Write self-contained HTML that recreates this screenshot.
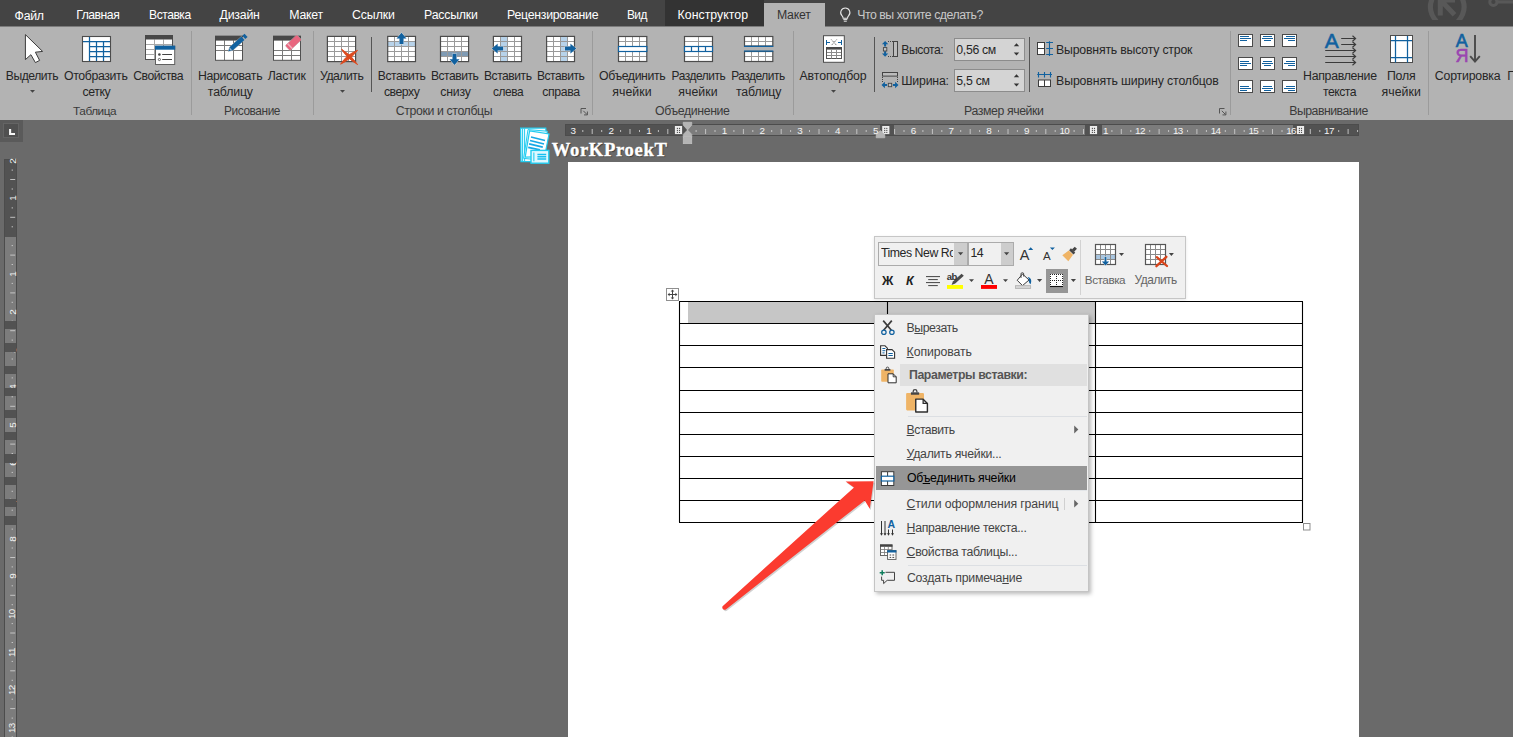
<!DOCTYPE html>
<html lang="ru"><head><meta charset="utf-8"><title>Word</title>
<style>
html,body{margin:0;padding:0}
body{width:1513px;height:737px;overflow:hidden;background:#6a6a6a;position:relative;font-family:"Liberation Sans", sans-serif;}
#root{position:absolute;left:0;top:0;width:1513px;height:737px;overflow:hidden}
#root div{position:absolute}
.t{position:absolute;white-space:nowrap;line-height:20px;height:20px}
u{text-decoration:underline;text-underline-offset:1px;text-decoration-thickness:1px}
svg{position:absolute;left:0;top:0}
</style></head><body><div id="root">

<div style="left:0px;top:0px;width:1513px;height:27px;background:#444444;"></div>
<div style="left:0px;top:26px;width:1513px;height:94px;background:#b3b3b3;"></div>
<div style="left:0px;top:0px;width:1513px;height:26px;background:#444444;"></div>
<div style="left:0px;top:26px;width:1513px;height:1px;background:#7c7c7c;"></div>
<div style="left:665px;top:0px;width:99px;height:26px;background:#333333;"></div>
<div style="left:764px;top:3px;width:61px;height:24px;background:#b3b3b3;"></div>
<div style="left:191px;top:31px;width:1px;height:84px;background:#9b9b9b;"></div>
<div style="left:313px;top:31px;width:1px;height:84px;background:#9b9b9b;"></div>
<div style="left:592px;top:31px;width:1px;height:84px;background:#9b9b9b;"></div>
<div style="left:793px;top:31px;width:1px;height:84px;background:#9b9b9b;"></div>
<div style="left:1230px;top:31px;width:1px;height:84px;background:#9b9b9b;"></div>
<div style="left:1428px;top:31px;width:1px;height:84px;background:#9b9b9b;"></div>
<div style="left:371px;top:37px;width:1px;height:55px;background:#555555;"></div>
<div style="left:874px;top:37px;width:1px;height:55px;background:#555555;"></div>
<div style="left:1029px;top:37px;width:1px;height:55px;background:#555555;"></div>
<div style="left:954px;top:38px;width:71px;height:23px;background:#d4d4d4;box-sizing:border-box;border:1px solid #8c8c8c;"></div>
<div style="left:954px;top:69px;width:71px;height:23px;background:#d4d4d4;box-sizing:border-box;border:1px solid #8c8c8c;"></div>
<div style="left:568px;top:162px;width:791px;height:600px;background:#ffffff;"></div>
<div style="left:565px;top:124px;width:794px;height:12px;background:#7c7c7c;"></div>
<div style="left:565px;top:124px;width:122px;height:12px;background:#525252;"></div>
<div style="left:879.5px;top:124px;width:14px;height:12px;background:#525252;"></div>
<div style="left:1085px;top:124px;width:16.5px;height:12px;background:#525252;"></div>
<div style="left:1293px;top:124px;width:66px;height:12px;background:#525252;"></div>
<div style="left:565px;top:124px;width:794px;height:12px;background:transparent;box-sizing:border-box;border:1px solid #4c4c4c;"></div>
<div style="left:4.4px;top:159.3px;width:12.2px;height:578px;background:#7c7c7c;"></div>
<div style="left:4.4px;top:159.3px;width:12.2px;height:77.89999999999998px;background:#525252;"></div>
<div style="left:4.4px;top:321.1px;width:12.2px;height:8.3px;background:#525252;"></div>
<div style="left:4.4px;top:343.3px;width:12.2px;height:8.3px;background:#525252;"></div>
<div style="left:4.4px;top:365.5px;width:12.2px;height:8.3px;background:#525252;"></div>
<div style="left:4.4px;top:387.7px;width:12.2px;height:8.3px;background:#525252;"></div>
<div style="left:4.4px;top:409.9px;width:12.2px;height:8.3px;background:#525252;"></div>
<div style="left:4.4px;top:432.1px;width:12.2px;height:8.3px;background:#525252;"></div>
<div style="left:4.4px;top:454.3px;width:12.2px;height:8.3px;background:#525252;"></div>
<div style="left:4.4px;top:476.5px;width:12.2px;height:8.3px;background:#525252;"></div>
<div style="left:4.4px;top:498.7px;width:12.2px;height:8.3px;background:#525252;"></div>
<div style="left:4.4px;top:516.3px;width:12.2px;height:8.3px;background:#525252;"></div>
<div style="left:4.4px;top:159.3px;width:12.2px;height:578px;background:transparent;box-sizing:border-box;border:1px solid #4c4c4c;border-bottom:none;"></div>
<div style="left:0px;top:120px;width:23px;height:22px;background:#5a5a5a;"></div>
<div style="left:3px;top:123px;width:16px;height:15px;background:#505050;box-sizing:border-box;border:1px solid #646464;"></div>
<svg width="1513" height="737" viewBox="0 0 1513 737">
<path d="M25.4 34.6 L25.4 59.6 L30.9 54.7 L35.4 62.6 L39.6 60.4 L35.4 52.2 L42.6 51.4 Z" fill="#ffffff" stroke="#3c3c3c" stroke-width="1" stroke-linejoin="miter"/>
<path d="M30.0 89.9 h5 l-2.5 2.8 Z" fill="#444444"/>
<path d="M340.0 89.9 h5 l-2.5 2.8 Z" fill="#444444"/>
<path d="M831.0 89.9 h5 l-2.5 2.8 Z" fill="#444444"/>
<rect x="82.5" y="36.5" width="28" height="25" fill="#fff"/>
<path d="M83 41.5H110.5 M89.5 46.5H110.5 M89.5 51.5H110.5 M89.5 56.5H110.5 M89.5 37V61.5 M96.5 41.5V61.5 M103.5 41.5V61.5" stroke="#11619f" stroke-width="1.25" fill="none"/>
<rect x="82.5" y="36.5" width="28" height="25" fill="none" stroke="#4c4c4c" stroke-width="1.1"/>
<rect x="145.5" y="35.5" width="27" height="24" fill="#fff"/>
<path d="M145.5 44.5H172.5 M145.5 49.5H172.5 M145.5 54.5H172.5 M154.5 39.5V59.5 M163.5 39.5V59.5" stroke="#a8a8a8" stroke-width="1" fill="none"/>
<rect x="145.5" y="35.5" width="27" height="24" fill="none" stroke="#505050" stroke-width="1"/>
<rect x="145" y="35" width="28" height="4.5" fill="#484848"/>
<rect x="155.5" y="46.2" width="19.2" height="18.3" fill="#fff" stroke="#606060" stroke-width="1"/>
<rect x="155" y="45.7" width="20.2" height="4" fill="#11619f"/>
<path d="M162.2 54.5H172 M162.2 59.5H172" stroke="#444" stroke-width="1" fill="none"/><circle cx="159.4" cy="54.5" r="1.3" fill="#444"/><circle cx="159.4" cy="59.5" r="1.1" fill="#fff" stroke="#444" stroke-width="0.8"/>
<rect x="215.5" y="36.3" width="27.0" height="24.0" fill="#fff"/><path d="M224.5 40.3V60.3M233.5 40.3V60.3M215.5 45.5H242.5M215.5 50.5H242.5" stroke="#7a7a7a" stroke-width="1" fill="none"/><rect x="215.5" y="36.3" width="27.0" height="24.0" fill="none" stroke="#505050" stroke-width="1"/><rect x="215.0" y="35.8" width="28.0" height="4.8" fill="#484848"/>
<g transform="translate(228.3 51.3) rotate(-41.8)"><path d="M0 0 L4 -2.25 L19.6 -2.25 L19.6 2.25 L4 2.25 Z" fill="#11619f" stroke="#b3b3b3" stroke-width="0.8" paint-order="stroke"/><rect x="20.8" y="-2.25" width="3" height="4.5" fill="#11619f"/><path d="M2.2 -1.0 L3.6 -1.8 L3.6 1.8 L2.2 1.0Z" fill="#9db9d2"/></g>
<rect x="273.5" y="36.3" width="27.0" height="24.0" fill="#fff"/><path d="M282.5 40.3V60.3M291.5 40.3V60.3M273.5 50.5H300.5M273.5 55.5H300.5" stroke="#7a7a7a" stroke-width="1" fill="none"/><rect x="273.5" y="36.3" width="27.0" height="24.0" fill="none" stroke="#505050" stroke-width="1"/><rect x="273.0" y="35.8" width="28.0" height="4.8" fill="#484848"/>
<g transform="translate(293.4 42.7) rotate(-43)"><rect x="-7.9" y="-3.4" width="15.8" height="6.8" rx="1.2" fill="#e8667f" stroke="#b3b3b3" stroke-width="0.7" paint-order="stroke"/><rect x="-5.6" y="-3.4" width="1.5" height="6.8" fill="#f4b0bd"/></g>
<rect x="327.4" y="36.4" width="28.200000000000045" height="25.200000000000003" fill="#ffffff"/><path d="M334.5 36.4V61.6M341.5 36.4V61.6M348.5 36.4V61.6M327.4 41.5H355.6M327.4 46.5H355.6M327.4 51.5H355.6M327.4 56.5H355.6" stroke="#9a9a9a" stroke-width="1" fill="none"/><rect x="327.4" y="36.4" width="28.200000000000045" height="25.200000000000003" fill="none" stroke="#4c4c4c" stroke-width="1.2"/>
<path d="M341.6 49.2 Q351.5 55 357.6 64.6 Q346.5 58 341.6 49.2Z M357.6 50.3 Q350.5 59.5 340.6 64.2 Q346.5 54.5 357.6 50.3Z" fill="#dc4a1e" stroke="#dc4a1e" stroke-width="0.9" stroke-linejoin="round"/>
<rect x="387.7" y="36.4" width="27.80000000000001" height="25.200000000000003" fill="#ffffff"/><rect x="387.7" y="41.44" width="27.80000000000001" height="5.04" fill="#b8d3ea"/><path d="M394.5 36.4V61.6M401.5 36.4V61.6M408.5 36.4V61.6M387.7 41.5H415.5M387.7 46.5H415.5M387.7 51.5H415.5M387.7 56.5H415.5" stroke="#9a9a9a" stroke-width="1" fill="none"/><rect x="387.7" y="36.4" width="27.80000000000001" height="25.200000000000003" fill="none" stroke="#4c4c4c" stroke-width="1.2"/>
<path transform="translate(401.5 38.4) rotate(0)" d="M0 -5.65 L4.9 0.14999999999999947 L2.0 0.14999999999999947 L2.0 5.65 L-2.0 5.65 L-2.0 0.14999999999999947 L-4.9 0.14999999999999947 Z" fill="#11619f" stroke="#e8eef4" stroke-width="0.8" paint-order="stroke"/>
<rect x="440.5" y="36.4" width="28.100000000000023" height="25.200000000000003" fill="#ffffff"/><rect x="440.5" y="51.52" width="28.100000000000023" height="5.04" fill="#7f9bb4"/><path d="M447.5 36.4V61.6M454.5 36.4V61.6M461.5 36.4V61.6M440.5 41.5H468.6M440.5 46.5H468.6M440.5 51.5H468.6M440.5 56.5H468.6" stroke="#9a9a9a" stroke-width="1" fill="none"/><rect x="440.5" y="36.4" width="28.100000000000023" height="25.200000000000003" fill="none" stroke="#4c4c4c" stroke-width="1.2"/>
<path transform="translate(454.5 59.4) rotate(180)" d="M0 -5.65 L4.9 0.14999999999999947 L2.0 0.14999999999999947 L2.0 5.65 L-2.0 5.65 L-2.0 0.14999999999999947 L-4.9 0.14999999999999947 Z" fill="#11619f" stroke="#e8eef4" stroke-width="0.8" paint-order="stroke"/>
<rect x="493.4" y="36.4" width="28.100000000000023" height="25.200000000000003" fill="#ffffff"/><rect x="500.42" y="36.4" width="7.03" height="25.200000000000003" fill="#b8d3ea"/><path d="M500.5 36.4V61.6M507.5 36.4V61.6M514.5 36.4V61.6M493.4 41.5H521.5M493.4 46.5H521.5M493.4 51.5H521.5M493.4 56.5H521.5" stroke="#9a9a9a" stroke-width="1" fill="none"/><rect x="493.4" y="36.4" width="28.100000000000023" height="25.200000000000003" fill="none" stroke="#4c4c4c" stroke-width="1.2"/>
<path transform="translate(497.5 48.6) rotate(270)" d="M0 -5.65 L4.9 0.14999999999999947 L2.0 0.14999999999999947 L2.0 5.65 L-2.0 5.65 L-2.0 0.14999999999999947 L-4.9 0.14999999999999947 Z" fill="#11619f" stroke="#e8eef4" stroke-width="0.8" paint-order="stroke"/>
<rect x="546.6" y="36.4" width="27.899999999999977" height="25.200000000000003" fill="#ffffff"/><rect x="560.55" y="36.4" width="6.97" height="25.200000000000003" fill="#b8d3ea"/><path d="M553.5 36.4V61.6M560.5 36.4V61.6M567.5 36.4V61.6M546.6 41.5H574.5M546.6 46.5H574.5M546.6 51.5H574.5M546.6 56.5H574.5" stroke="#9a9a9a" stroke-width="1" fill="none"/><rect x="546.6" y="36.4" width="27.899999999999977" height="25.200000000000003" fill="none" stroke="#4c4c4c" stroke-width="1.2"/>
<path transform="translate(570.6 48.6) rotate(90)" d="M0 -5.65 L4.9 0.14999999999999947 L2.0 0.14999999999999947 L2.0 5.65 L-2.0 5.65 L-2.0 0.14999999999999947 L-4.9 0.14999999999999947 Z" fill="#11619f" stroke="#e8eef4" stroke-width="0.8" paint-order="stroke"/>
<rect x="618.5" y="36.5" width="28.299999999999955" height="25.0" fill="#ffffff"/><path d="M625.5 36.5V61.5M632.5 36.5V61.5M639.5 36.5V61.5M618.5 41.5H646.8M618.5 46.5H646.8M618.5 51.5H646.8M618.5 56.5H646.8" stroke="#9a9a9a" stroke-width="1" fill="none"/><rect x="618.5" y="36.5" width="28.299999999999955" height="25.0" fill="none" stroke="#4c4c4c" stroke-width="1.2"/>
<rect x="618.5" y="46.5" width="28.3" height="5" fill="#fff" stroke="#11619f" stroke-width="1.2"/>
<rect x="684.5" y="36.5" width="28.0" height="25.0" fill="#ffffff"/><path d="M698.5 36.5V61.5M684.5 41.5H712.5M684.5 46.5H712.5M684.5 51.5H712.5M684.5 56.5H712.5" stroke="#9a9a9a" stroke-width="1" fill="none"/><rect x="684.5" y="36.5" width="28.0" height="25.0" fill="none" stroke="#4c4c4c" stroke-width="1.2"/>
<rect x="684.5" y="46.5" width="28" height="5" fill="#fff" stroke="#11619f" stroke-width="1.2"/><path d="M691.5 46.5v5M698.5 46.5v5M705.5 46.5v5" stroke="#11619f" stroke-width="1.2"/>
<rect x="744.5" y="36.5" width="28.299999999999955" height="9.5" fill="#ffffff"/><path d="M751.5 36.5V46M758.5 36.5V46M765.5 36.5V46M744.5 41.5H772.8" stroke="#9a9a9a" stroke-width="1" fill="none"/><rect x="744.5" y="36.5" width="28.299999999999955" height="9.5" fill="none" stroke="#4c4c4c" stroke-width="1.2"/>
<rect x="744.5" y="51.5" width="28.299999999999955" height="10.0" fill="#ffffff"/><path d="M751.5 51.5V61.5M758.5 51.5V61.5M765.5 51.5V61.5M744.5 56.5H772.8" stroke="#9a9a9a" stroke-width="1" fill="none"/><rect x="744.5" y="51.5" width="28.299999999999955" height="10.0" fill="none" stroke="#4c4c4c" stroke-width="1.2"/>
<path d="M744 46.3H773.3 M744 51.2H773.3" stroke="#11619f" stroke-width="1.3"/>
<rect x="823.5" y="35.7" width="20.8" height="26.6" fill="#fff" stroke="#4c4c4c" stroke-width="1"/>
<path d="M826.5 40V45 M841.5 40V45 M826.5 42.5H830 M838 42.5H841.5" stroke="#11619f" stroke-width="1" fill="none"/>
<path d="M831.3 39.5L836.7 45.5 M836.7 39.5L831.3 45.5" stroke="#555" stroke-width="0.9" stroke-dasharray="1.2 0.9" fill="none"/>
<rect x="826.5" y="47.5" width="15" height="11" fill="#fff" stroke="#555" stroke-width="1"/><rect x="826" y="47" width="16" height="2.6" fill="#484848"/><path d="M827 52.5H841 M827 55.5H841 M831.5 50V58.5 M836.5 50V58.5" stroke="#8a8a8a" stroke-width="1" fill="none"/>
<path d="M885.1 40.9 L888.3000000000001 44.3 H886.1 V46.5 H884.1 V44.3 H881.9 Z" fill="#11619f"/>
<path d="M885.1 56.8 L888.3000000000001 53.4 H886.1 V51.199999999999996 H884.1 V53.4 H881.9 Z" fill="#11619f"/>
<rect x="883.4" y="47.6" width="3.4" height="3.4" fill="#c4c4c4" stroke="#444" stroke-width="0.9"/>
<path d="M888 41.5H893 M888 56.5H893" stroke="#444" stroke-width="1" stroke-dasharray="1 1" fill="none"/>
<rect x="893.5" y="41.5" width="4" height="15" fill="#bcbcbc" stroke="#444" stroke-width="1"/>
<rect x="882.5" y="72.5" width="15" height="3.6" fill="#bcbcbc" stroke="#444" stroke-width="1"/>
<path d="M882.5 77V82.5 M897.5 77V82.5" stroke="#444" stroke-width="1" stroke-dasharray="1 1" fill="none"/>
<path d="M881.5 85 L884.9 81.8 V84 H887.1 V86 H884.9 V88.2 Z" fill="#11619f"/>
<path d="M898.5 85 L895.1 81.8 V84 H892.9 V86 H895.1 V88.2 Z" fill="#11619f"/>
<rect x="888.3" y="83.3" width="3.4" height="3.4" fill="#c4c4c4" stroke="#444" stroke-width="0.9"/>
<path d="M1013.8 46.2 h5.4 l-2.7 -3Z M1013.8 52.5 h5.4 l-2.7 3Z" fill="#333"/>
<path d="M1013.8 77.2 h5.4 l-2.7 -3Z M1013.8 83.5 h5.4 l-2.7 3Z" fill="#333"/>
<rect x="1037.5" y="42.5" width="7" height="12" fill="#fff" stroke="#3c3c3c" stroke-width="1"/><path d="M1037.5 48.5H1044.5" stroke="#3c3c3c" stroke-width="1"/>
<path d="M1049.5 41.2V56 M1046.2 42.5H1053 M1046.2 48.5H1053 M1046.2 54.5H1053" stroke="#11619f" stroke-width="1.1" fill="none"/>
<rect x="1038.5" y="80" width="12" height="6.5" fill="#fff" stroke="#3c3c3c" stroke-width="1"/><path d="M1044.5 80V86.5" stroke="#3c3c3c" stroke-width="1"/>
<path d="M1037.2 74.5H1052 M1038.5 72V77.6 M1044.5 72V77.6 M1050.5 72V77.6" stroke="#11619f" stroke-width="1.1" fill="none"/>
<path d="M581 113.5V108.5H586" stroke="#555" stroke-width="1" fill="none"/><path d="M583.3 110.8L587 114.5 M587.4 111.5V114.9H584" stroke="#555" stroke-width="1" fill="none"/>
<path d="M1219.5 113.5V108.5H1224.5" stroke="#555" stroke-width="1" fill="none"/><path d="M1221.8 110.8L1225.5 114.5 M1225.9 111.5V114.9H1222.5" stroke="#555" stroke-width="1" fill="none"/>
<rect x="1238.5" y="34.5" width="14" height="12" fill="#fff" stroke="#4a4a4a" stroke-width="1"/>
<rect x="1240.0" y="36.0" width="9" height="1" fill="#11619f"/>
<rect x="1240.0" y="38.0" width="11" height="1" fill="#11619f"/>
<rect x="1240.0" y="40.0" width="7" height="1" fill="#11619f"/>
<rect x="1260.5" y="34.5" width="14" height="12" fill="#fff" stroke="#4a4a4a" stroke-width="1"/>
<rect x="1263.0" y="36.0" width="9" height="1" fill="#11619f"/>
<rect x="1262.0" y="38.0" width="11" height="1" fill="#11619f"/>
<rect x="1264.0" y="40.0" width="7" height="1" fill="#11619f"/>
<rect x="1282.5" y="34.5" width="14" height="12" fill="#fff" stroke="#4a4a4a" stroke-width="1"/>
<rect x="1286.0" y="36.0" width="9" height="1" fill="#11619f"/>
<rect x="1284.0" y="38.0" width="11" height="1" fill="#11619f"/>
<rect x="1288.0" y="40.0" width="7" height="1" fill="#11619f"/>
<rect x="1238.5" y="57.5" width="14" height="12" fill="#fff" stroke="#4a4a4a" stroke-width="1"/>
<rect x="1240.0" y="61.0" width="9" height="1" fill="#11619f"/>
<rect x="1240.0" y="63.0" width="11" height="1" fill="#11619f"/>
<rect x="1240.0" y="65.0" width="7" height="1" fill="#11619f"/>
<rect x="1260.5" y="57.5" width="14" height="12" fill="#fff" stroke="#4a4a4a" stroke-width="1"/>
<rect x="1263.0" y="61.0" width="9" height="1" fill="#11619f"/>
<rect x="1262.0" y="63.0" width="11" height="1" fill="#11619f"/>
<rect x="1264.0" y="65.0" width="7" height="1" fill="#11619f"/>
<rect x="1282.5" y="57.5" width="14" height="12" fill="#fff" stroke="#4a4a4a" stroke-width="1"/>
<rect x="1286.0" y="61.0" width="9" height="1" fill="#11619f"/>
<rect x="1284.0" y="63.0" width="11" height="1" fill="#11619f"/>
<rect x="1288.0" y="65.0" width="7" height="1" fill="#11619f"/>
<rect x="1238.5" y="80.5" width="14" height="12" fill="#fff" stroke="#4a4a4a" stroke-width="1"/>
<rect x="1240.0" y="86.0" width="9" height="1" fill="#11619f"/>
<rect x="1240.0" y="88.0" width="11" height="1" fill="#11619f"/>
<rect x="1240.0" y="90.0" width="7" height="1" fill="#11619f"/>
<rect x="1260.5" y="80.5" width="14" height="12" fill="#fff" stroke="#4a4a4a" stroke-width="1"/>
<rect x="1263.0" y="86.0" width="9" height="1" fill="#11619f"/>
<rect x="1262.0" y="88.0" width="11" height="1" fill="#11619f"/>
<rect x="1264.0" y="90.0" width="7" height="1" fill="#11619f"/>
<rect x="1282.5" y="80.5" width="14" height="12" fill="#fff" stroke="#4a4a4a" stroke-width="1"/>
<rect x="1286.0" y="86.0" width="9" height="1" fill="#11619f"/>
<rect x="1284.0" y="88.0" width="11" height="1" fill="#11619f"/>
<rect x="1288.0" y="90.0" width="7" height="1" fill="#11619f"/>
<path d="M1341.2 38.5H1355.6 M1352.5 35.8L1355.6 38.5L1352.5 41.2" stroke="#3a3a3a" stroke-width="1.15" fill="none"/>
<path d="M1341.2 44.5H1355.6 M1352.5 41.8L1355.6 44.5L1352.5 47.2" stroke="#3a3a3a" stroke-width="1.15" fill="none"/>
<path d="M1325.2 50.5H1355.6 M1352.5 47.8L1355.6 50.5L1352.5 53.2" stroke="#3a3a3a" stroke-width="1.15" fill="none"/>
<path d="M1325.2 56.5H1355.6 M1352.5 53.8L1355.6 56.5L1352.5 59.2" stroke="#3a3a3a" stroke-width="1.15" fill="none"/>
<path d="M1325.2 62.5H1355.6 M1352.5 59.8L1355.6 62.5L1352.5 65.2" stroke="#3a3a3a" stroke-width="1.15" fill="none"/>
<rect x="1390.5" y="35.5" width="22" height="27" fill="#fff" stroke="#4c4c4c" stroke-width="1"/>
<path d="M1395.5 36V62.5 M1407.5 36V62.5 M1391 40.5H1412 M1391 57.5H1412" stroke="#11619f" stroke-width="1.25" fill="none"/>
<path d="M1475 35.1V61 M1470.2 56.2L1475 61.6L1479.8 56.2" stroke="#4a4a4a" stroke-width="1.9" fill="none"/>
<path d="M845.3 8 a4.6 4.6 0 0 1 3.2 7.9 c-0.8 0.9 -1 1.5 -1 2.4 h-4.4 c0 -0.9 -0.2 -1.5 -1 -2.4 a4.6 4.6 0 0 1 3.2 -7.9Z" fill="none" stroke="#e6e6e6" stroke-width="1.1"/><path d="M843.3 19.6h4 M843.8 21.2h3" stroke="#e6e6e6" stroke-width="1"/>
<g stroke="#585858" fill="none" stroke-width="5"><path d="M1436 -8 Q1424.5 8 1436.5 21.5"/><path d="M1458.5 -8 Q1470 8 1458 21.5"/><path d="M1440.3 15.5 V-3 M1441 0.5 L1454.5 14.8 M1440 0 H1455" /></g><circle cx="1493.4" cy="1.9" r="3.6" fill="none" stroke="#585858" stroke-width="3"/><path d="M1497.5 1.9H1513" stroke="#585858" stroke-width="3.2"/>
<rect x="1424" y="20" width="48" height="6" fill="#444444"/>
<path d="M592.2 129V134M630.0 129V134M667.8 129V134M705.6 129V134M743.4 129V134M781.2 129V134M819.0 129V134M856.8 129V134M894.6 129V134M932.4 129V134M970.2 129V134M1008.0 129V134M1045.8 129V134M1083.5 129V134M1121.3 129V134M1159.1 129V134M1196.9 129V134M1234.7 129V134M1272.5 129V134M1310.3 129V134M1348.1 129V134" stroke="#cccccc" stroke-width="0.9" fill="none"/><path d="M582.8 130V132M601.7 130V132M620.6 130V132M639.5 130V132M658.4 130V132M677.3 130V132M696.1 130V132M715.0 130V132M733.9 130V132M752.8 130V132M771.7 130V132M790.6 130V132M809.5 130V132M828.4 130V132M847.3 130V132M866.2 130V132M885.1 130V132M904.0 130V132M922.9 130V132M941.8 130V132M960.7 130V132M979.6 130V132M998.5 130V132M1017.4 130V132M1036.3 130V132M1055.2 130V132M1074.1 130V132M1093.0 130V132M1111.9 130V132M1130.8 130V132M1149.7 130V132M1168.6 130V132M1187.5 130V132M1206.4 130V132M1225.3 130V132M1244.2 130V132M1263.1 130V132M1282.0 130V132M1300.9 130V132M1319.8 130V132M1338.7 130V132M1357.6 130V132" stroke="#cccccc" stroke-width="0.9" fill="none"/>
<rect x="674.9" y="126" width="7.2" height="8.1" fill="#ececec"/><rect x="676.85" y="127.85" width="1.1" height="1.1" fill="#4a4a4a"/><rect x="676.85" y="129.85" width="1.1" height="1.1" fill="#4a4a4a"/><rect x="676.85" y="131.85" width="1.1" height="1.1" fill="#4a4a4a"/><rect x="678.95" y="127.85" width="1.1" height="1.1" fill="#4a4a4a"/><rect x="678.95" y="129.85" width="1.1" height="1.1" fill="#4a4a4a"/><rect x="678.95" y="131.85" width="1.1" height="1.1" fill="#4a4a4a"/>
<rect x="882.1999999999999" y="126" width="7.2" height="8.1" fill="#ececec"/><rect x="884.15" y="127.85" width="1.1" height="1.1" fill="#4a4a4a"/><rect x="884.15" y="129.85" width="1.1" height="1.1" fill="#4a4a4a"/><rect x="884.15" y="131.85" width="1.1" height="1.1" fill="#4a4a4a"/><rect x="886.25" y="127.85" width="1.1" height="1.1" fill="#4a4a4a"/><rect x="886.25" y="129.85" width="1.1" height="1.1" fill="#4a4a4a"/><rect x="886.25" y="131.85" width="1.1" height="1.1" fill="#4a4a4a"/>
<rect x="1089.9" y="126" width="7.2" height="8.1" fill="#ececec"/><rect x="1091.85" y="127.85" width="1.1" height="1.1" fill="#4a4a4a"/><rect x="1091.85" y="129.85" width="1.1" height="1.1" fill="#4a4a4a"/><rect x="1091.85" y="131.85" width="1.1" height="1.1" fill="#4a4a4a"/><rect x="1093.95" y="127.85" width="1.1" height="1.1" fill="#4a4a4a"/><rect x="1093.95" y="129.85" width="1.1" height="1.1" fill="#4a4a4a"/><rect x="1093.95" y="131.85" width="1.1" height="1.1" fill="#4a4a4a"/>
<rect x="1296.9" y="126" width="7.2" height="8.1" fill="#ececec"/><rect x="1298.85" y="127.85" width="1.1" height="1.1" fill="#4a4a4a"/><rect x="1298.85" y="129.85" width="1.1" height="1.1" fill="#4a4a4a"/><rect x="1298.85" y="131.85" width="1.1" height="1.1" fill="#4a4a4a"/><rect x="1300.95" y="127.85" width="1.1" height="1.1" fill="#4a4a4a"/><rect x="1300.95" y="129.85" width="1.1" height="1.1" fill="#4a4a4a"/><rect x="1300.95" y="131.85" width="1.1" height="1.1" fill="#4a4a4a"/>
<path d="M683.2 122.3 H691.8 V125 L687.5 130 L683.2 125 Z" fill="#b4b4b4" stroke="#c6c6c6" stroke-width="0.6"/>
<path d="M683.2 137 V134.4 L687.5 130 L691.8 134.4 V137 Z" fill="#b4b4b4" stroke="#c6c6c6" stroke-width="0.6"/>
<rect x="683.2" y="137.6" width="8.6" height="6.1" fill="#b4b4b4" stroke="#c6c6c6" stroke-width="0.6"/>
<path d="M876.2 137.8 V134.6 L880.5 130.6 L884.8 134.6 V137.8 Z" fill="#b4b4b4" stroke="#c6c6c6" stroke-width="0.6"/>
<path d="M10.2 179.5H15.2M10.2 217.3H15.2M10.2 255.1H15.2M10.2 292.9H15.2M10.2 330.7H15.2M10.2 368.5H15.2M10.2 406.3H15.2M10.2 444.1H15.2M10.2 481.9H15.2M10.2 519.7H15.2M10.2 557.5H15.2M10.2 595.3H15.2M10.2 633.0H15.2M10.2 670.8H15.2M10.2 708.6H15.2M11.6 170.1H13M11.6 189.0H13M11.6 207.9H13M11.6 226.8H13M11.6 245.6H13M11.6 264.5H13M11.6 283.4H13M11.6 302.3H13M11.6 321.2H13M11.6 340.1H13M11.6 359.0H13M11.6 377.9H13M11.6 396.8H13M11.6 415.7H13M11.6 434.6H13M11.6 453.5H13M11.6 472.4H13M11.6 491.3H13M11.6 510.2H13M11.6 529.1H13M11.6 548.0H13M11.6 566.9H13M11.6 585.8H13M11.6 604.7H13M11.6 623.6H13M11.6 642.5H13M11.6 661.4H13M11.6 680.3H13M11.6 699.2H13M11.6 718.1H13M11.6 737.0H13" stroke="#cccccc" stroke-width="0.9" fill="none"/>
<path d="M10.1 128.9V134H15" stroke="#f6f6f6" stroke-width="2.1" fill="none"/>
<rect x="688" y="302" width="199" height="21" fill="#c6c6c6"/><rect x="888" y="302" width="207" height="21" fill="#c6c6c6"/>
<path d="M679.0 301.5H1303.0M679.0 323.5H1303.0M679.0 345.5H1303.0M679.0 367.5H1303.0M679.0 390.5H1303.0M679.0 412.5H1303.0M679.0 434.5H1303.0M679.0 456.5H1303.0M679.0 478.5H1303.0M679.0 500.5H1303.0M679.0 522.5H1303.0M679.5 301.5V522.5M887.5 301.5V522.5M1095.5 301.5V522.5M1302.5 301.5V522.5" stroke="#000" stroke-width="1.1" fill="none"/>
<rect x="666.5" y="288.5" width="12" height="12" fill="#fff" stroke="#8f8f8f" stroke-width="1"/>
<path d="M672.5 290.6V298.4 M668.6 294.5H676.4" stroke="#444" stroke-width="1" fill="none"/><path d="M672.5 289.6l1.8 2h-3.6Z M672.5 299.4l1.8 -2h-3.6Z M667.6 294.5l2 -1.8v3.6Z M677.4 294.5l-2 -1.8v3.6Z" fill="#444"/>
<rect x="1303.5" y="523.5" width="6.5" height="6.5" fill="#fff" stroke="#8f8f8f" stroke-width="1"/>
<g>
<path d="M520.6 128.2 L545.8 128 L546.2 140 L536 161.6 L521 161.6 Z" fill="#f4fdff" stroke="#22ccf0" stroke-width="1.2"/>
<path d="M522.6 128.5 V161.5 M524.6 128.5 V161.5" stroke="#22ccf0" stroke-width="1"/>
<path d="M528 129.6 L547.4 131.2 L541 160 L523.6 158.4 Z" fill="#e6faff" stroke="#22ccf0" stroke-width="1"/>
<path d="M529.6 130.8 L549 134 L544.6 156.5 L525.2 157.2 Z" fill="#ffffff" stroke="#22ccf0" stroke-width="1.2"/>
<path d="M531 137 L545 140.5 M530 140.5 L544 144 M529.1 143.9 L542.8 147.2 M528.2 147.3 L540 149.9" stroke="#17a9e6" stroke-width="1.7"/>
<rect x="531" y="150.4" width="17.8" height="12.8" fill="#dff8ff" stroke="#22ccf0" stroke-width="1.4"/>
<path d="M537.4 154.6H546.2 M537.4 156.7H546.2 M537.4 159H546.2" stroke="#19bff0" stroke-width="1.5"/>
<path d="M533.8 152.6V161.2" stroke="#5cdcf6" stroke-width="1.6"/>
</g>
</svg>
<div style="left:874px;top:236px;width:312px;height:63px;background:#f0f0f0;box-sizing:border-box;border:1px solid #c6c6c6;box-shadow:0 1px 3px rgba(0,0,0,.10);"></div>
<div style="left:878px;top:242px;width:89.5px;height:24px;background:#f0f0f0;box-sizing:border-box;border:1px solid #ababab;"></div>
<div style="left:954px;top:243px;width:12.5px;height:22px;background:#cdcdcd;"></div>
<div style="left:968px;top:242px;width:46px;height:24px;background:#f0f0f0;box-sizing:border-box;border:1px solid #ababab;"></div>
<div style="left:1000.5px;top:243px;width:12.5px;height:22px;background:#cdcdcd;"></div>
<div style="left:1046px;top:269px;width:22px;height:24px;background:#969696;"></div>
<div style="left:1080px;top:240px;width:1px;height:55px;background:#d2d2d2;"></div>
<div style="left:874px;top:314px;width:215px;height:278px;background:#f0f0f0;box-sizing:border-box;border:1px solid #c4c4c4;box-shadow:2px 2px 4px rgba(0,0,0,.27);"></div>
<div style="left:900px;top:364px;width:187px;height:21.5px;background:#e0e0e0;"></div>
<div style="left:876.3px;top:466.2px;width:210.7px;height:23.8px;background:#969696;"></div>
<div style="left:908px;top:416px;width:179px;height:1px;background:#dcdfe3;"></div>
<div style="left:908px;top:564.5px;width:179px;height:1px;background:#dcdfe3;"></div>
<div style="left:908px;top:490px;width:179px;height:1px;background:#e2e5e8;"></div>
<div style="left:1064px;top:497.5px;width:1px;height:12.5px;background:#d0d0d0;"></div>
<svg width="1513" height="737" viewBox="0 0 1513 737">
<path d="M958.0 252.3 h5.2 l-2.6 2.9 Z" fill="#444444"/>
<path d="M1004.0 252.3 h5.2 l-2.6 2.9 Z" fill="#444444"/>
<path d="M1028.2 249.9 h5 l-2.5 -2.6Z M1049.9 247.4 h5 l-2.5 2.6Z" fill="#11619f"/>
<g transform="translate(1070.9 252.7) rotate(45) scale(0.92)"><rect x="-1.7" y="-7.6" width="3.4" height="4.4" fill="#444"/><rect x="-3.3" y="-3.4" width="6.6" height="2.8" fill="#444"/><path d="M-3.3 0 H3.3 L4.6 8.6 H-4.6 Z" fill="#efb466"/></g>
<path d="M926 276.6H940 M928.2 279.6H937.8 M926 282.6H940 M928.2 285.6H937.8" stroke="#444" stroke-width="1" fill="none"/>
<path d="M961.6 273.8 L963.8 275.8 L955.2 283.6 L951.6 285 L952.9 281.6 Z" fill="#4a4a4a"/>
<rect x="947" y="285" width="16" height="3.9" fill="#ffff00"/>
<path d="M969.0 279.2 h5 l-2.5 2.8 Z" fill="#444444"/>
<rect x="981" y="285" width="16" height="3.9" fill="#ff0000"/>
<path d="M1003.0 279.2 h5 l-2.5 2.8 Z" fill="#444444"/>
<path d="M1022.5 274 L1029 280 L1022.5 285.6 L1017.2 280.3 Z" fill="#fff" stroke="#3c3c3c" stroke-width="1"/><path d="M1021 278 V273.9 a1.35 1.2 0 0 1 2.7 0 V276.6" fill="none" stroke="#3c3c3c" stroke-width="0.9"/><path d="M1027.6 277.1 C1030.8 277.3 1032.2 280.6 1030.6 284.2 C1029 283 1028.4 281.2 1028.9 279 Z" fill="#11619f"/>
<rect x="1015.5" y="285.7" width="15.2" height="2.8" fill="#d4d4d4" stroke="#a8a8a8" stroke-width="0.7"/>
<path d="M1037.0 279 h5.2 l-2.6 2.9 Z" fill="#444444"/>
<rect x="1050" y="274" width="13" height="13" fill="#fff"/><path d="M1050 274.5H1063 M1050 280.5H1063" stroke="#222" stroke-width="1" stroke-dasharray="1 1" fill="none"/><path d="M1050.5 274V286 M1056.5 274V286 M1062.5 274V286" stroke="#222" stroke-width="1" stroke-dasharray="1 1" fill="none"/><path d="M1050 286.5H1063" stroke="#111" stroke-width="1.1"/>
<path d="M1070.8000000000002 279 h5.2 l-2.6 2.9 Z" fill="#444444"/>
<rect x="1095.5" y="244.5" width="20.0" height="20.0" fill="#ffffff"/><rect x="1095.5" y="254.50" width="20.0" height="5.00" fill="#a9c6e0"/><path d="M1100.5 244.5V264.5M1105.5 244.5V264.5M1110.5 244.5V264.5M1095.5 249.5H1115.5M1095.5 254.5H1115.5M1095.5 259.5H1115.5" stroke="#8a8a8a" stroke-width="1" fill="none"/><rect x="1095.5" y="244.5" width="20.0" height="20.0" fill="none" stroke="#555" stroke-width="1.2"/>
<path transform="translate(1105.5 261.2) rotate(180)" d="M0 -4.25 L3.6 -0.25 L0.9 -0.25 L0.9 4.25 L-0.9 4.25 L-0.9 -0.25 L-3.6 -0.25 Z" fill="#11619f" stroke="#e8eef4" stroke-width="0.8" paint-order="stroke"/>
<path d="M1119.0 253 h5 l-2.5 2.9 Z" fill="#444444"/>
<rect x="1145.5" y="244.5" width="20.0" height="20.0" fill="#ffffff"/><path d="M1150.5 244.5V264.5M1155.5 244.5V264.5M1160.5 244.5V264.5M1145.5 249.5H1165.5M1145.5 254.5H1165.5M1145.5 259.5H1165.5" stroke="#8a8a8a" stroke-width="1" fill="none"/><rect x="1145.5" y="244.5" width="20.0" height="20.0" fill="none" stroke="#555" stroke-width="1.2"/>
<path d="M1156.8 257.2 L1167 266 M1166.4 256.8 L1156.4 266.2" stroke="#d9441a" stroke-width="2.3" stroke-linecap="round" fill="none"/>
<path d="M1168.9 253 h5 l-2.5 2.9 Z" fill="#444444"/>
<path d="M1074.2 425.6 L1078.3 429.5 L1074.2 433.4Z" fill="#666"/>
<path d="M1074.2 499.8 L1078.3 503.7 L1074.2 507.59999999999997Z" fill="#666"/>
<path d="M883.2 320.6 L891.4 330.2 M891.8 320.6 L883.6 330.2" stroke="#3c3c3c" stroke-width="1.7" fill="none"/><circle cx="883.9" cy="332.2" r="2.2" fill="none" stroke="#11619f" stroke-width="1.25"/><circle cx="891.9" cy="332.2" r="2.2" fill="none" stroke="#11619f" stroke-width="1.25"/>
<path d="M880.6 345.8H885.0L887.4 348.2V355.40000000000003H880.6Z" fill="#fff" stroke="#333" stroke-width="1.1"/>
<path d="M882.4 348.5H885.4 M882.4 350.7H885.4 M882.4 352.9H884.6" stroke="#11619f" stroke-width="1"/>
<path d="M886.6 349.6H892.0L894.6 352.20000000000005V358.20000000000005H886.6Z" fill="#fff" stroke="#333" stroke-width="1.1"/>
<path d="M888.4 353.5H892.8 M888.4 355.5H892.8" stroke="#11619f" stroke-width="1"/>
<g transform="translate(881.2 366.8) scale(1.0)"><rect x="0" y="2.6" width="12.6" height="12.4" rx="0.8" fill="#efb466"/><path d="M3.4 2.2 h5.8 v1.7 h-5.8Z" fill="#444"/><path d="M5 2.4 V1.4 a1.3 1.1 0 0 1 2.6 0 V2.4" fill="none" stroke="#444" stroke-width="0.9"/><path d="M6.8 7 H12 L15 10 V16 H6.8 Z" fill="#fff" stroke="#2e2e2e" stroke-width="1" stroke-linejoin="round"/><path d="M12 7 V10 H15" fill="none" stroke="#2e2e2e" stroke-width="0.9"/></g>
<g transform="translate(906.1 389.2) scale(1.42)"><rect x="0" y="2.6" width="12.6" height="12.4" rx="0.8" fill="#efb466"/><path d="M3.4 2.2 h5.8 v1.7 h-5.8Z" fill="#444"/><path d="M5 2.4 V1.4 a1.3 1.1 0 0 1 2.6 0 V2.4" fill="none" stroke="#444" stroke-width="0.9"/><path d="M6.8 7 H12 L15 10 V16 H6.8 Z" fill="#fff" stroke="#2e2e2e" stroke-width="1" stroke-linejoin="round"/><path d="M12 7 V10 H15" fill="none" stroke="#2e2e2e" stroke-width="0.9"/></g>
<rect x="881.4" y="471.7" width="12.4" height="13.8" fill="#fff" stroke="#3a3a3a" stroke-width="1"/><path d="M887.6 472V476 M887.6 481V485.5" stroke="#3a3a3a" stroke-width="1"/><rect x="881.4" y="476.2" width="12.4" height="4.8" fill="#fff" stroke="#11619f" stroke-width="1.2"/>
<path d="M881.5 521V534.5 M885 521V534.5 M888.5 529.5V534.5 M892.5 529.5V534.5" stroke="#333" stroke-width="1" fill="none"/><path d="M880 533.2l1.5 2.6l1.5 -2.6Z M883.5 533.2l1.5 2.6l1.5 -2.6Z M887 533.2l1.5 2.6l1.5 -2.6Z M891 533.2l1.5 2.6l1.5 -2.6Z" fill="#333"/>
<rect x="880.5" y="545" width="11.5" height="10.5" fill="#fff" stroke="#555" stroke-width="0.9"/><rect x="880" y="544.4" width="12.5" height="2.4" fill="#444"/><path d="M880.5 549.5H892 M880.5 552.5H892 M884.5 547V555.5 M888.3 547V555.5" stroke="#777" stroke-width="0.8"/><rect x="887.6" y="550.6" width="8.4" height="8.8" fill="#fff" stroke="#555" stroke-width="0.9"/><rect x="887.2" y="550.2" width="9.2" height="2.3" fill="#11619f"/><path d="M889.6 555H891.2 M892.4 555H894.2 M889.6 557.4H891.2 M892.4 557.4H894.2" stroke="#444" stroke-width="1"/>
<path d="M885.5 572.3H894.5V580.3H887.2L883.6 583.6V580.3H881.6V576.6" fill="none" stroke="#444" stroke-width="1"/><path d="M882.2 570.2V575.2 M879.7 572.7H884.7" stroke="#0f7d5c" stroke-width="1.5"/>
<g><path d="M722.6 606.2 L854.0 487.4 L845.6 481.4 L873.6 481.3 L869.8 508.8 L864.8 500.4 L726.2 609.2 A2.4 2.4 0 0 1 722.6 606.2 Z" fill="rgba(0,0,0,.18)" transform="translate(1 1.4)"/><path d="M722.6 606.2 L854.0 487.4 L845.6 481.4 L873.6 481.3 L869.8 508.8 L864.8 500.4 L726.2 609.2 A2.4 2.4 0 0 1 722.6 606.2 Z" fill="#fb3b2f"/></g>
</svg>
<span class="t" id="t0" style="left:14.6px;top:6px;font-size:12.3px;color:#ffffff;letter-spacing:-0.31px;">Файл</span>
<span class="t" id="t1" style="left:76.2px;top:5px;font-size:12.2px;color:#ffffff;letter-spacing:-0.47px;">Главная</span>
<span class="t" id="t2" style="left:149.1px;top:5px;font-size:12.1px;color:#ffffff;letter-spacing:-0.48px;">Вставка</span>
<span class="t" id="t3" style="left:219.5px;top:5px;font-size:12.3px;color:#ffffff;letter-spacing:-0.19px;">Дизайн</span>
<span class="t" id="t4" style="left:289.3px;top:5px;font-size:12.3px;color:#ffffff;letter-spacing:-0.25px;">Макет</span>
<span class="t" id="t5" style="left:351.9px;top:5px;font-size:12.3px;color:#ffffff;letter-spacing:-0.04px;">Ссылки</span>
<span class="t" id="t6" style="left:424.1px;top:5px;font-size:12.3px;color:#ffffff;letter-spacing:-0.21px;">Рассылки</span>
<span class="t" id="t7" style="left:507.1px;top:5px;font-size:12.3px;color:#ffffff;letter-spacing:-0.27px;">Рецензирование</span>
<span class="t" id="t8" style="left:626.9px;top:5px;font-size:11.9px;color:#ffffff;letter-spacing:-0.46px;">Вид</span>
<span class="t" id="t9" style="left:677.6px;top:5px;font-size:12.3px;color:#ffffff;letter-spacing:0.03px;">Конструктор</span>
<span class="t" id="t10" style="left:776.9px;top:5px;font-size:12.3px;color:#333333;letter-spacing:-0.23px;">Макет</span>
<span class="t" id="t11" style="left:857.2px;top:5px;font-size:12.3px;color:#c8c8c8;letter-spacing:-0.47px;">Что вы хотите сделать?</span>
<span class="t" id="t12" style="left:5.8px;top:66px;font-size:12.1px;color:#262626;letter-spacing:-0.44px;">Выделить</span>
<span class="t" id="t13" style="left:64.0px;top:66px;font-size:12.3px;color:#262626;letter-spacing:-0.36px;">Отобразить</span>
<span class="t" id="t14" style="left:82.4px;top:82px;font-size:12.3px;color:#262626;letter-spacing:-0.40px;">сетку</span>
<span class="t" id="t15" style="left:133.2px;top:66px;font-size:12.2px;color:#262626;letter-spacing:-0.46px;">Свойства</span>
<span class="t" id="t16" style="left:197.9px;top:66px;font-size:12.3px;color:#262626;letter-spacing:-0.32px;">Нарисовать</span>
<span class="t" id="t17" style="left:207.8px;top:82px;font-size:12.3px;color:#262626;letter-spacing:-0.14px;">таблицу</span>
<span class="t" id="t18" style="left:267.7px;top:66px;font-size:12.3px;color:#262626;letter-spacing:-0.15px;">Ластик</span>
<span class="t" id="t19" style="left:320.1px;top:66px;font-size:12.2px;color:#262626;letter-spacing:-0.47px;">Удалить</span>
<span class="t" id="t20" style="left:377.8px;top:66px;font-size:12.1px;color:#262626;letter-spacing:-0.47px;">Вставить</span>
<span class="t" id="t21" style="left:383.9px;top:82px;font-size:12.3px;color:#262626;letter-spacing:-0.48px;">сверху</span>
<span class="t" id="t22" style="left:430.9px;top:66px;font-size:12.1px;color:#262626;letter-spacing:-0.47px;">Вставить</span>
<span class="t" id="t23" style="left:440.2px;top:82px;font-size:12.3px;color:#262626;letter-spacing:-0.17px;">снизу</span>
<span class="t" id="t24" style="left:484.0px;top:66px;font-size:12.1px;color:#262626;letter-spacing:-0.47px;">Вставить</span>
<span class="t" id="t25" style="left:493.1px;top:82px;font-size:11.9px;color:#262626;letter-spacing:-0.47px;">слева</span>
<span class="t" id="t26" style="left:536.9px;top:66px;font-size:12.1px;color:#262626;letter-spacing:-0.48px;">Вставить</span>
<span class="t" id="t27" style="left:542.2px;top:82px;font-size:12.3px;color:#262626;letter-spacing:-0.38px;">справа</span>
<span class="t" id="t28" style="left:599.0px;top:66px;font-size:12.3px;color:#262626;letter-spacing:-0.40px;">Объединить</span>
<span class="t" id="t29" style="left:612.3px;top:82px;font-size:12.3px;color:#262626;letter-spacing:0.05px;">ячейки</span>
<span class="t" id="t30" style="left:671.6px;top:66px;font-size:11.9px;color:#262626;letter-spacing:-0.44px;">Разделить</span>
<span class="t" id="t31" style="left:678.3px;top:82px;font-size:12.3px;color:#262626;letter-spacing:0.05px;">ячейки</span>
<span class="t" id="t32" style="left:731.2px;top:66px;font-size:11.9px;color:#262626;letter-spacing:-0.44px;">Разделить</span>
<span class="t" id="t33" style="left:735.9px;top:82px;font-size:12.3px;color:#262626;letter-spacing:-0.11px;">таблицу</span>
<span class="t" id="t34" style="left:799.5px;top:66px;font-size:12.3px;color:#262626;letter-spacing:-0.08px;">Автоподбор</span>
<span class="t" id="t35" style="left:901.3px;top:40px;font-size:12.2px;color:#262626;letter-spacing:-0.48px;">Высота:</span>
<span class="t" id="t36" style="left:901.3px;top:71px;font-size:12.3px;color:#262626;letter-spacing:-0.20px;">Ширина:</span>
<span class="t" id="t37" style="left:956.3px;top:40px;font-size:12.3px;color:#262626;letter-spacing:-0.33px;">0,56 см</span>
<span class="t" id="t38" style="left:956.3px;top:71px;font-size:12.3px;color:#262626;letter-spacing:-0.27px;">5,5 см</span>
<span class="t" id="t39" style="left:1056.1px;top:40px;font-size:12.3px;color:#262626;letter-spacing:-0.20px;">Выровнять высоту строк</span>
<span class="t" id="t40" style="left:1056.1px;top:71px;font-size:12.3px;color:#262626;letter-spacing:-0.12px;">Выровнять ширину столбцов</span>
<span class="t" id="t41" style="left:1303.1px;top:66px;font-size:12.3px;color:#262626;letter-spacing:-0.29px;">Направление</span>
<span class="t" id="t42" style="left:1322.9px;top:82px;font-size:12.2px;color:#262626;letter-spacing:-0.46px;">текста</span>
<span class="t" id="t43" style="left:1386.9px;top:66px;font-size:12.3px;color:#262626;letter-spacing:-0.18px;">Поля</span>
<span class="t" id="t44" style="left:1381.5px;top:82px;font-size:12.3px;color:#262626;letter-spacing:0.05px;">ячейки</span>
<span class="t" id="t45" style="left:1434.8px;top:66px;font-size:12.3px;color:#262626;letter-spacing:-0.18px;">Сортировка</span>
<span class="t" id="t46" style="left:1507.3px;top:66px;font-size:12.3px;color:#262626;">П</span>
<span class="t" id="t47" style="left:73.1px;top:101px;font-size:11.8px;color:#3a3a3a;letter-spacing:-0.46px;">Таблица</span>
<span class="t" id="t48" style="left:224.1px;top:101px;font-size:11.9px;color:#3a3a3a;letter-spacing:-0.44px;">Рисование</span>
<span class="t" id="t49" style="left:395.8px;top:101px;font-size:12.3px;color:#3a3a3a;letter-spacing:-0.38px;">Строки и столбцы</span>
<span class="t" id="t50" style="left:655.1px;top:101px;font-size:12.3px;color:#3a3a3a;letter-spacing:-0.38px;">Объединение</span>
<span class="t" id="t51" style="left:964.1px;top:101px;font-size:12.3px;color:#3a3a3a;letter-spacing:-0.41px;">Размер ячейки</span>
<span class="t" id="t52" style="left:1289.2px;top:101px;font-size:12.3px;color:#3a3a3a;letter-spacing:-0.50px;">Выравнивание</span>
<span class="t" id="t53" style="left:1324.7px;top:31px;font-size:21px;color:#11619f;-webkit-text-stroke:0.5px #11619f;">A</span>
<span class="t" id="t54" style="left:1455.8px;top:31px;font-size:18px;color:#11619f;-webkit-text-stroke:0.6px #11619f;">A</span>
<span class="t" id="t55" style="left:1455.6px;top:46px;font-size:18px;color:#9a45b0;-webkit-text-stroke:0.6px #9a45b0;">Я</span>
<span class="t" id="t56" style="left:570.6px;top:121px;font-size:9.9px;color:#f4f4f4;">3</span>
<span class="t" id="t57" style="left:608.4px;top:121px;font-size:9.9px;color:#f4f4f4;">2</span>
<span class="t" id="t58" style="left:646.2px;top:121px;font-size:9.9px;color:#f4f4f4;">1</span>
<span class="t" id="t59" style="left:721.7px;top:121px;font-size:9.9px;color:#f4f4f4;">1</span>
<span class="t" id="t60" style="left:759.5px;top:121px;font-size:9.9px;color:#f4f4f4;">2</span>
<span class="t" id="t61" style="left:797.3px;top:121px;font-size:9.9px;color:#f4f4f4;">3</span>
<span class="t" id="t62" style="left:835.1px;top:121px;font-size:9.9px;color:#f4f4f4;">4</span>
<span class="t" id="t63" style="left:872.9px;top:121px;font-size:9.9px;color:#f4f4f4;">5</span>
<span class="t" id="t64" style="left:910.7px;top:121px;font-size:9.9px;color:#f4f4f4;">6</span>
<span class="t" id="t65" style="left:948.5px;top:121px;font-size:9.9px;color:#f4f4f4;">7</span>
<span class="t" id="t66" style="left:986.3px;top:121px;font-size:9.9px;color:#f4f4f4;">8</span>
<span class="t" id="t67" style="left:1024.1px;top:121px;font-size:9.9px;color:#f4f4f4;">9</span>
<span class="t" id="t68" style="left:1059.5px;top:121px;font-size:9.9px;color:#f4f4f4;letter-spacing:-0.7px;">10</span>
<span class="t" id="t69" style="left:1103.0px;top:121px;font-size:9.9px;color:#f4f4f4;">1</span>
<span class="t" id="t70" style="left:1135.1px;top:121px;font-size:9.9px;color:#f4f4f4;letter-spacing:-0.7px;">12</span>
<span class="t" id="t71" style="left:1172.9px;top:121px;font-size:9.9px;color:#f4f4f4;letter-spacing:-0.7px;">13</span>
<span class="t" id="t72" style="left:1210.7px;top:121px;font-size:9.9px;color:#f4f4f4;letter-spacing:-0.7px;">14</span>
<span class="t" id="t73" style="left:1248.5px;top:121px;font-size:9.9px;color:#f4f4f4;letter-spacing:-0.7px;">15</span>
<span class="t" id="t74" style="left:1286.3px;top:121px;font-size:9.9px;color:#f4f4f4;letter-spacing:-0.7px;">16</span>
<span class="t" id="t75" style="left:1324.1px;top:121px;font-size:9.9px;color:#f4f4f4;letter-spacing:-0.7px;">17</span>
<span class="t" id="t76" style="left:9.7px;top:151px;font-size:9.9px;color:#f4f4f4;transform:rotate(-90deg);transform-origin:2.8px 9.9px;">2</span>
<span class="t" id="t77" style="left:9.7px;top:188px;font-size:9.9px;color:#f4f4f4;transform:rotate(-90deg);transform-origin:2.8px 9.9px;">1</span>
<span class="t" id="t78" style="left:9.7px;top:264px;font-size:9.9px;color:#f4f4f4;transform:rotate(-90deg);transform-origin:2.8px 9.9px;">1</span>
<span class="t" id="t79" style="left:9.7px;top:302px;font-size:9.9px;color:#f4f4f4;transform:rotate(-90deg);transform-origin:2.8px 9.9px;">2</span>
<span class="t" id="t80" style="left:9.7px;top:340px;font-size:9.9px;color:#f4f4f4;transform:rotate(-90deg);transform-origin:2.8px 9.9px;">3</span>
<span class="t" id="t81" style="left:9.7px;top:377px;font-size:9.9px;color:#f4f4f4;transform:rotate(-90deg);transform-origin:2.8px 9.9px;">4</span>
<span class="t" id="t82" style="left:9.7px;top:415px;font-size:9.9px;color:#f4f4f4;transform:rotate(-90deg);transform-origin:2.8px 9.9px;">5</span>
<span class="t" id="t83" style="left:9.7px;top:453px;font-size:9.9px;color:#f4f4f4;transform:rotate(-90deg);transform-origin:2.8px 9.9px;">6</span>
<span class="t" id="t84" style="left:9.7px;top:491px;font-size:9.9px;color:#f4f4f4;transform:rotate(-90deg);transform-origin:2.8px 9.9px;">7</span>
<span class="t" id="t85" style="left:9.7px;top:529px;font-size:9.9px;color:#f4f4f4;transform:rotate(-90deg);transform-origin:2.8px 9.9px;">8</span>
<span class="t" id="t86" style="left:9.7px;top:566px;font-size:9.9px;color:#f4f4f4;transform:rotate(-90deg);transform-origin:2.8px 9.9px;">9</span>
<span class="t" id="t87" style="left:7.2px;top:604px;font-size:9.9px;color:#f4f4f4;transform:rotate(-90deg);transform-origin:5.2px 9.9px;letter-spacing:-0.7px;">10</span>
<span class="t" id="t88" style="left:7.2px;top:642px;font-size:9.9px;color:#f4f4f4;transform:rotate(-90deg);transform-origin:5.2px 9.9px;letter-spacing:-0.7px;">11</span>
<span class="t" id="t89" style="left:7.2px;top:680px;font-size:9.9px;color:#f4f4f4;transform:rotate(-90deg);transform-origin:5.2px 9.9px;letter-spacing:-0.7px;">12</span>
<span class="t" id="t90" style="left:7.2px;top:718px;font-size:9.9px;color:#f4f4f4;transform:rotate(-90deg);transform-origin:5.2px 9.9px;letter-spacing:-0.7px;">13</span>
<span class="t" id="t91" style="left:551.8px;top:140px;font-size:18.6px;color:#ffffff;font-weight:bold;font-family:'Liberation Serif', serif;letter-spacing:0.65px;text-shadow:1px 1px 1px rgba(0,0,0,.45);-webkit-text-stroke:0.35px #fff;">WorKProekT</span>
<span class="t" id="t92" style="left:880.9px;top:243px;font-size:12.3px;color:#262626;width:72.3px;overflow:hidden;letter-spacing:-0.45px;">Times New Ro</span>
<span class="t" id="t93" style="left:970.6px;top:243px;font-size:12.3px;color:#262626;letter-spacing:-0.6px;">14</span>
<span class="t" id="t94" style="left:1019.8px;top:245px;font-size:14.5px;color:#333;">A</span>
<span class="t" id="t95" style="left:1043.0px;top:246px;font-size:11.5px;color:#333;">A</span>
<span class="t" id="t96" style="left:882.0px;top:271px;font-size:12.5px;color:#222;font-weight:bold;">Ж</span>
<span class="t" id="t97" style="left:906.0px;top:271px;font-size:12.5px;color:#222;font-weight:bold;font-style:italic;">К</span>
<span class="t" id="t98" style="left:946.8px;top:267px;font-size:9.5px;color:#333;font-weight:bold;letter-spacing:-0.6px;">ab</span>
<span class="t" id="t99" style="left:984.2px;top:269px;font-size:14px;color:#333;">A</span>
<span class="t" id="t100" style="left:1084.8px;top:270px;font-size:11.7px;color:#666;letter-spacing:-0.44px;">Вставка</span>
<span class="t" id="t101" style="left:1134.5px;top:270px;font-size:11.9px;color:#666;letter-spacing:-0.43px;">Удалить</span>
<span class="t" id="t102" style="left:906.6px;top:318px;font-size:12.3px;color:#444444;letter-spacing:-0.46px;">В<u>ы</u>резать</span>
<span class="t" id="t103" style="left:906.6px;top:342px;font-size:12.3px;color:#444444;letter-spacing:-0.09px;"><u>К</u>опировать</span>
<span class="t" id="t104" style="left:909.0px;top:365px;font-size:12.3px;color:#555;font-weight:bold;letter-spacing:-0.41px;">Параметры вставки:</span>
<span class="t" id="t105" style="left:906.6px;top:420px;font-size:12.2px;color:#444444;letter-spacing:-0.47px;"><u>В</u>ставить</span>
<span class="t" id="t106" style="left:906.6px;top:444px;font-size:12.3px;color:#444444;letter-spacing:-0.28px;"><u>У</u>далить ячейки...</span>
<span class="t" id="t107" style="left:906.9px;top:468px;font-size:12.3px;color:#000;letter-spacing:-0.23px;">Об<u>ъ</u>единить ячейки</span>
<span class="t" id="t108" style="left:906.6px;top:494px;font-size:12.3px;color:#444444;letter-spacing:-0.12px;"><u>С</u>тили оформления границ</span>
<span class="t" id="t109" style="left:906.6px;top:518px;font-size:12.3px;color:#444444;letter-spacing:-0.33px;"><u>Н</u>аправление текста...</span>
<span class="t" id="t110" style="left:906.6px;top:542px;font-size:12.3px;color:#444444;letter-spacing:-0.30px;"><u>С</u>войства таблицы...</span>
<span class="t" id="t111" style="left:906.9px;top:568px;font-size:12.3px;color:#444444;letter-spacing:-0.22px;">Создать примеча<u>н</u>ие</span>
<span class="t" id="t112" style="left:887.4px;top:514px;font-size:10.5px;color:#11619f;font-weight:bold;">A</span>
<div style="left:5.4px;top:321.1px;width:10.2px;height:8.3px;background:#525252;"></div>
<div style="left:5.4px;top:343.3px;width:10.2px;height:8.3px;background:#525252;"></div>
<div style="left:5.4px;top:365.5px;width:10.2px;height:8.3px;background:#525252;"></div>
<div style="left:5.4px;top:387.7px;width:10.2px;height:8.3px;background:#525252;"></div>
<div style="left:5.4px;top:409.9px;width:10.2px;height:8.3px;background:#525252;"></div>
<div style="left:5.4px;top:432.1px;width:10.2px;height:8.3px;background:#525252;"></div>
<div style="left:5.4px;top:454.3px;width:10.2px;height:8.3px;background:#525252;"></div>
<div style="left:5.4px;top:476.5px;width:10.2px;height:8.3px;background:#525252;"></div>
<div style="left:5.4px;top:498.7px;width:10.2px;height:8.3px;background:#525252;"></div>
<div style="left:5.4px;top:516.3px;width:10.2px;height:8.3px;background:#525252;"></div>

</div></body></html>
